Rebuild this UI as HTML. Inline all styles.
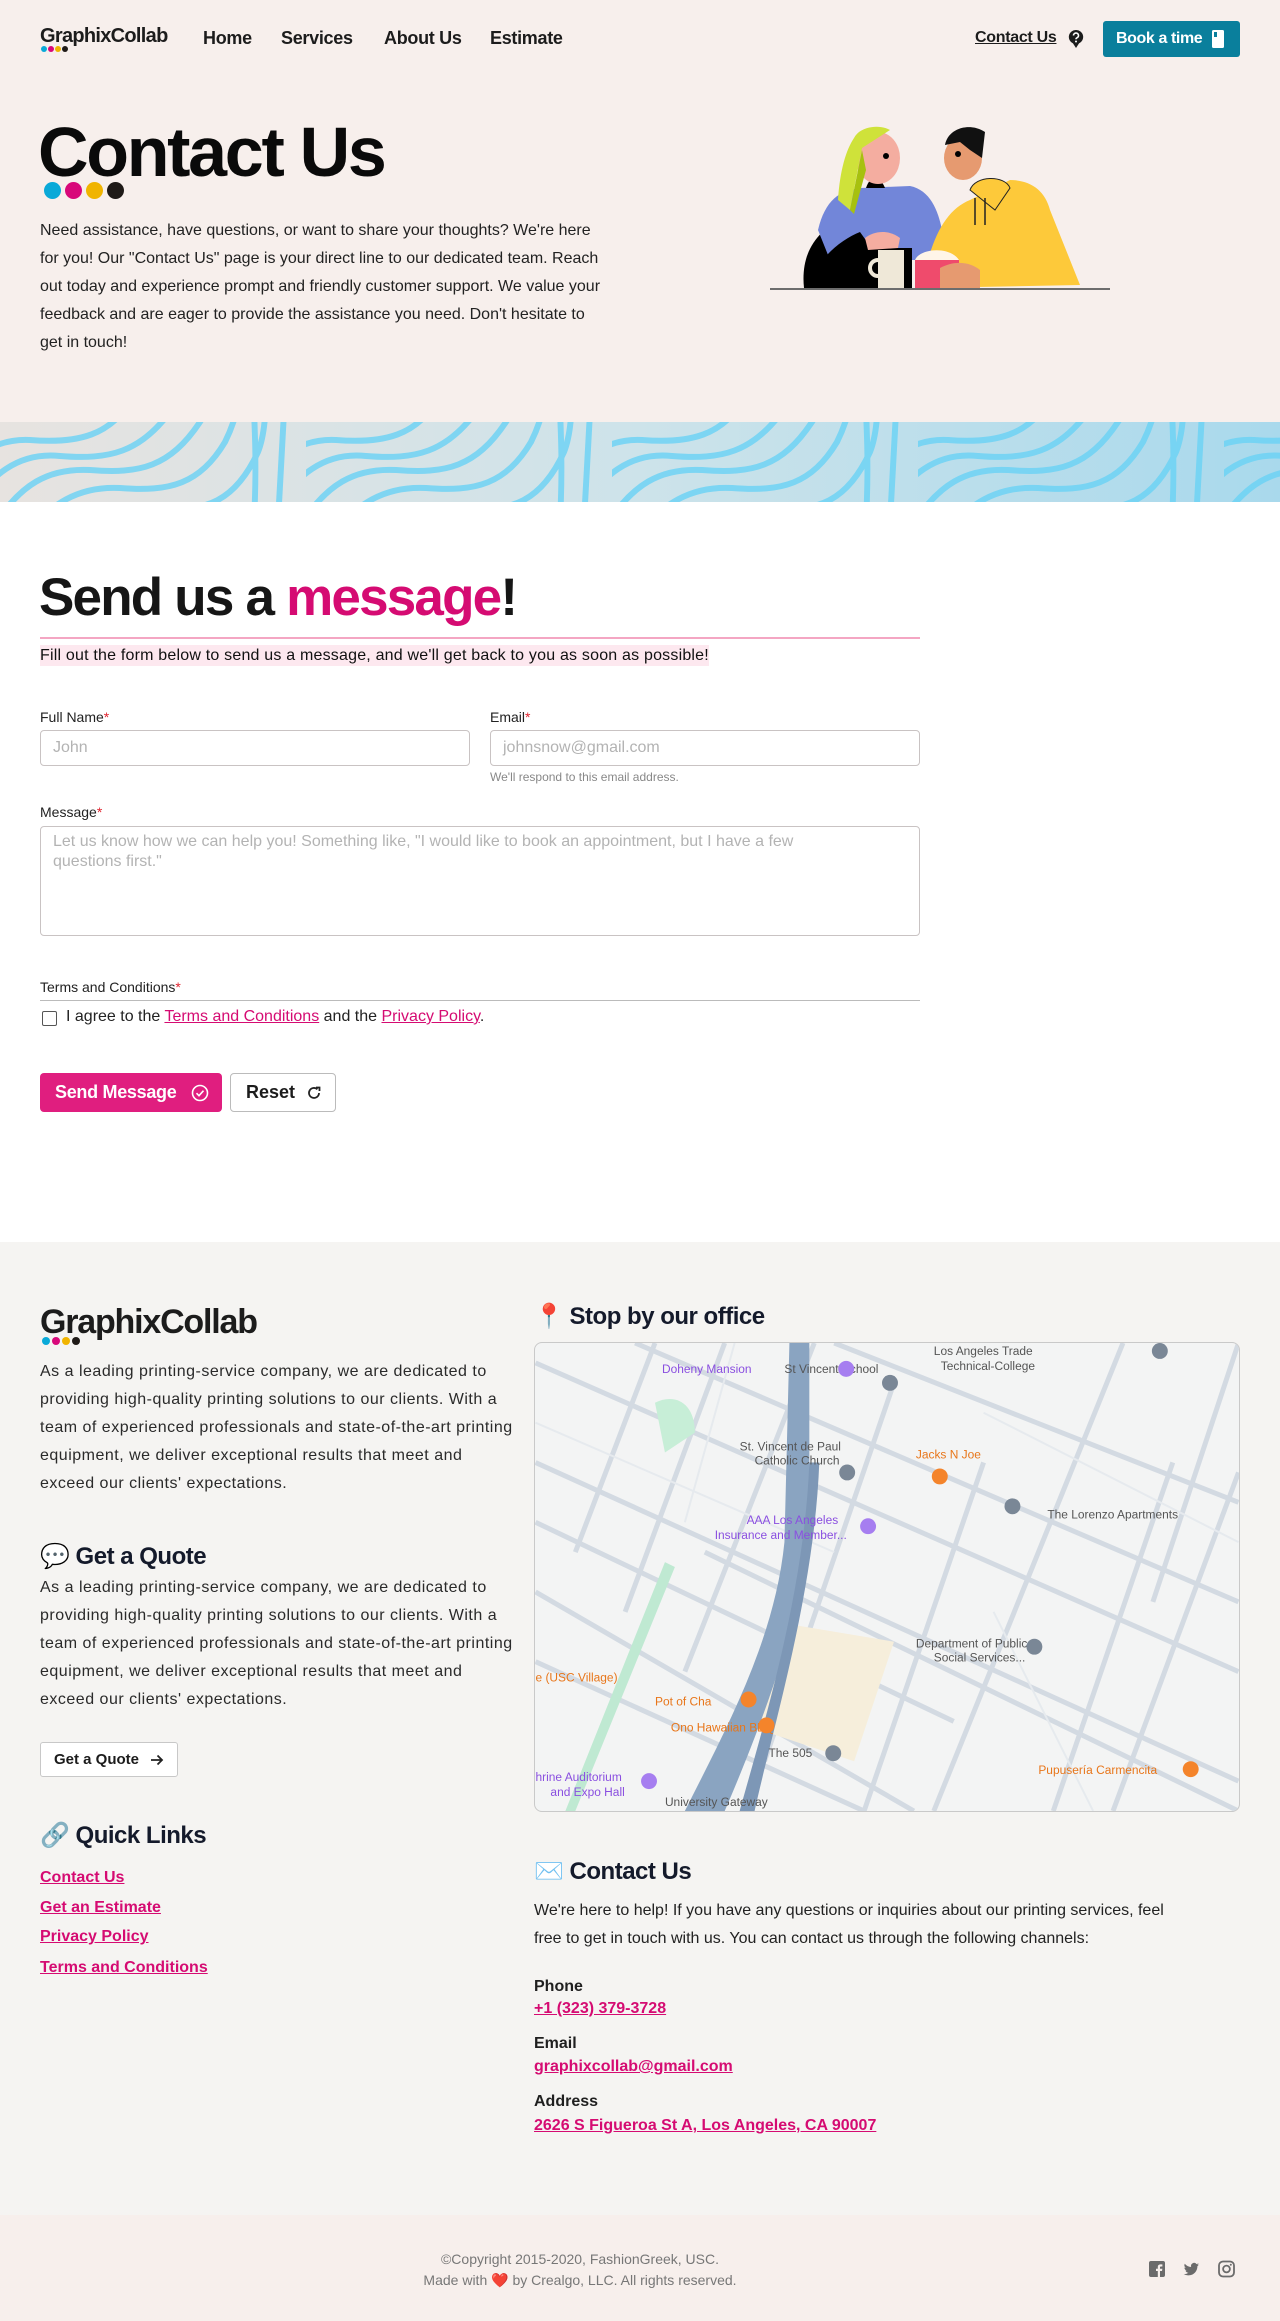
<!DOCTYPE html>
<html><head><meta charset="utf-8">
<style>
*{margin:0;padding:0;box-sizing:border-box}
body{width:1280px;height:2321px;font-family:"Liberation Sans",Arial,sans-serif;color:#1f1f1f;background:#fff;position:relative;overflow:hidden}
.abs{position:absolute}
.hero{position:absolute;left:0;top:0;width:1280px;height:422px;background:#f7efec}
.nav a{position:absolute;top:28px;font-size:18px;font-weight:bold;color:#1c1c1c;text-decoration:none;letter-spacing:-0.3px}
.dots span{display:inline-block;border-radius:50%;margin-right:3px}
.pink{color:#d50b72}
.lbl{position:absolute;font-size:14px;color:#222}
.lbl b{color:#e0242f;font-weight:normal}
.inp{position:absolute;border:1px solid #c9c3c3;border-radius:4px;background:#fff;font-size:16px;color:#b3b3b3;padding:8px 12px;line-height:22px}
.fp{position:absolute;font-size:16px;line-height:28px;color:#2a2a2a;letter-spacing:0.5px}
.h3{position:absolute;font-size:24px;font-weight:bold;color:#141a2b;letter-spacing:-0.5px}
.ql{position:absolute;left:40px;font-size:16px;font-weight:bold;color:#d50b72;text-decoration:underline}
.ci{position:absolute;left:534px;font-size:16px;font-weight:bold}
</style></head><body>
<div class="hero"></div>

<!-- NAV -->
<div class="abs" style="left:40px;top:25px;font-size:20px;font-weight:bold;letter-spacing:-0.7px;color:#1c1c1c">GraphixCollab</div>
<div class="abs dots" style="left:41px;top:46px;line-height:0"><span style="width:6px;height:6px;background:#0aa9d8;margin-right:1px"></span><span style="width:6px;height:6px;background:#d8087a;margin-right:1px"></span><span style="width:6px;height:6px;background:#f0b400;margin-right:1px"></span><span style="width:6px;height:6px;background:#1f1a17"></span></div>
<div class="nav">
<a style="left:203px">Home</a>
<a style="left:281px">Services</a>
<a style="left:384px">About Us</a>
<a style="left:490px">Estimate</a>
</div>
<div class="abs" style="left:975px;top:29px;font-size:16px;font-weight:bold;text-decoration:underline;color:#1c1c1c;letter-spacing:-0.3px">Contact Us</div>
<svg class="abs" style="left:1068px;top:29px" width="16" height="20" viewBox="0 0 16 20"><path d="M8 1a7 7 0 0 0-3 13.4L8 19l3-4.6A7 7 0 0 0 8 1z" fill="#1c1c1c"/><path d="M5.5 6.5a2.5 2.5 0 1 1 3.5 2.3c-.7.3-1 .8-1 1.5" stroke="#fff" stroke-width="1.6" fill="none"/><circle cx="8" cy="12.5" r="1" fill="#fff"/></svg>
<div class="abs" style="left:1103px;top:21px;width:137px;height:36px;background:#0a7f9c;border-radius:3px;color:#fff;font-size:16px;font-weight:bold;line-height:36px;padding-left:13px;letter-spacing:-0.4px">Book a time</div>
<svg class="abs" style="left:1212px;top:30px" width="12" height="18"><rect width="12" height="18" rx="1.5" fill="#fff"/><rect x="2" y="2" width="3" height="5" fill="#0a7f9c"/></svg>

<!-- HERO TEXT -->
<div class="abs" style="left:38px;top:112px;font-size:70px;font-weight:bold;letter-spacing:-2.3px;color:#0a0a0a;line-height:80px">Contact Us</div>
<div class="abs dots" style="left:44px;top:182px;line-height:0"><span style="width:17px;height:17px;background:#0aa9d8;margin-right:4px"></span><span style="width:17px;height:17px;background:#d8087a;margin-right:4px"></span><span style="width:17px;height:17px;background:#f0b400;margin-right:4px"></span><span style="width:17px;height:17px;background:#1f1a17"></span></div>
<div class="abs" style="left:40px;top:217px;width:562px;font-size:16px;line-height:28px;color:#222">Need assistance, have questions, or want to share your thoughts? We're here for you! Our "Contact Us" page is your direct line to our dedicated team. Reach out today and experience prompt and friendly customer support. We value your feedback and are eager to provide the assistance you need. Don't hesitate to get in touch!</div>

<!-- ILLUSTRATION -->
<svg class="abs" style="left:770px;top:120px" width="340" height="175" viewBox="0 0 340 175">
<path d="M34 168 C30 130 50 110 70 100 L120 120 L100 168 Z" fill="#000"/>
<path d="M48 110 C55 80 70 70 90 68 L140 66 C160 70 168 90 172 110 L160 140 L60 140 Z" fill="#7286d9"/>
<rect x="72" y="128" width="70" height="40" fill="#000"/>
<path d="M40 168 C45 140 70 120 90 112 L110 140 L60 168 Z" fill="#000"/>
<path d="M96 68 C100 55 110 55 115 68 Z" fill="#000"/>
<ellipse cx="108" cy="38" rx="22" ry="26" fill="#f4ada0"/>
<path d="M84 18 C90 6 110 4 120 10 L92 28 L80 90 L68 80 C70 50 76 30 84 18 Z" fill="#cfe23a"/>
<path d="M80 90 L92 30 L96 50 L84 94 Z" fill="#a7c10f"/>
<circle cx="116" cy="36" r="3" fill="#000"/>
<path d="M95 118 C105 110 120 110 130 118 L128 128 L98 130 Z" fill="#f4ada0"/>
<path d="M108 130 h26 v38 h-26 z" fill="#efe8d8"/>
<path d="M108 140 a8 8 0 0 0 0 16" stroke="#efe8d8" stroke-width="4" fill="none"/>
<path d="M152 168 C160 120 175 90 200 80 L240 60 C260 60 275 70 280 90 L310 165 Z" fill="#fdc93a"/>
<path d="M200 70 C205 55 235 55 240 68 L225 90 Z" fill="#fdc93a" stroke="#222" stroke-width="1"/>
<line x1="205" y1="78" x2="205" y2="105" stroke="#222" stroke-width="1.5"/>
<line x1="215" y1="78" x2="215" y2="105" stroke="#222" stroke-width="1.5"/>
<ellipse cx="193" cy="38" rx="19" ry="22" fill="#e69a70"/>
<path d="M175 25 C178 8 200 2 215 12 L212 38 L200 30 L190 22 Z" fill="#111"/>
<circle cx="188" cy="34" r="3" fill="#000"/>
<path d="M145 140 h44 v28 h-44 z" fill="#ef4b6c"/>
<path d="M145 140 C150 128 180 126 189 140 Z" fill="#fff5e8"/>
<path d="M170 148 C185 140 200 142 210 150 L210 168 L170 168 Z" fill="#e69a70"/>
<line x1="0" y1="169" x2="340" y2="169" stroke="#6d6d6d" stroke-width="2"/>
</svg>

<!-- WAVE BAND -->
<svg class="abs" style="left:0;top:422px" width="1280" height="80">
<defs>
<linearGradient id="bg" x1="0" x2="1"><stop offset="0" stop-color="#e7e3e0"/><stop offset="0.5" stop-color="#cde3ea"/><stop offset="1" stop-color="#a9d9ec"/></linearGradient>
<pattern id="wv" width="306" height="80" patternUnits="userSpaceOnUse">
<g fill="none" stroke="#69d2f5" stroke-width="6" opacity="0.8">
<path d="M-40 100 C-10 50 20 30 60 34 C110 38 140 30 170 -10"/>
<path d="M-10 110 C20 60 50 46 90 48 C140 52 170 45 200 0 C212 -20 220 -40 222 -60"/>
<path d="M20 120 C50 80 80 64 120 66 C170 70 200 62 225 20 C235 0 240 -20 240 -40"/>
<path d="M60 130 C90 90 120 84 160 86 C205 90 235 80 258 30 C266 10 266 -20 266 -40"/>
<path d="M-70 90 C-40 40 -10 16 30 18 C80 22 110 12 130 -20"/>
<path d="M254 -10 C256 30 256 60 254 100"/>
<path d="M284 -10 C282 30 280 60 278 100"/>
</g></pattern></defs>
<rect width="1280" height="80" fill="url(#bg)"/>
<rect width="1280" height="80" fill="url(#wv)"/>
</svg>

<!-- FORM SECTION -->
<div class="abs" style="left:39px;top:566px;font-size:53px;font-weight:bold;letter-spacing:-1.8px;color:#161616;line-height:64px">Send us a <span class="pink">message</span>!</div>
<div class="abs" style="left:40px;top:637px;width:880px;height:2px;background:#f4a6c3"></div>
<div class="abs" style="left:40px;top:645px;font-size:16px;line-height:21px;background:#fde8ef;color:#111;letter-spacing:0.2px">Fill out the form below to send us a message, and we'll get back to you as soon as possible!</div>

<div class="lbl" style="left:40px;top:709px">Full Name<b>*</b></div>
<div class="inp" style="left:40px;top:730px;width:430px;height:36px;padding-top:6px">John</div>
<div class="lbl" style="left:490px;top:709px">Email<b>*</b></div>
<div class="inp" style="left:490px;top:730px;width:430px;height:36px;padding-top:6px">johnsnow@gmail.com</div>
<div class="abs" style="left:490px;top:770px;font-size:12px;color:#888">We'll respond to this email address.</div>
<div class="lbl" style="left:40px;top:804px">Message<b>*</b></div>
<div class="inp" style="left:40px;top:826px;width:880px;height:110px;padding:5px 60px 0 12px;line-height:20px;font-size:16px">Let us know how we can help you! Something like, "I would like to book an appointment, but I have a few questions first."</div>
<div class="lbl" style="left:40px;top:979px">Terms and Conditions<b>*</b></div>
<div class="abs" style="left:40px;top:1000px;width:880px;height:1px;background:#bbb"></div>
<div class="abs" style="left:42px;top:1011px;width:15px;height:15px;border:1.5px solid #555;border-radius:2px"></div>
<div class="abs" style="left:66px;top:1008px;font-size:16px;color:#222">I agree to the <span class="pink" style="text-decoration:underline">Terms and Conditions</span> and the <span class="pink" style="text-decoration:underline">Privacy Policy</span>.</div>
<div class="abs" style="left:40px;top:1073px;width:182px;height:39px;background:#e01e7f;border-radius:4px;color:#fff;font-size:18px;font-weight:bold;line-height:39px;padding-left:15px;letter-spacing:-0.3px">Send Message</div>
<svg class="abs" style="left:191px;top:1084px" width="18" height="18"><circle cx="9" cy="9" r="7.5" stroke="#fff" stroke-width="1.6" fill="none"/><path d="M5.5 9.2l2.5 2.5 4.5-5" stroke="#fff" stroke-width="1.6" fill="none"/></svg>
<div class="abs" style="left:230px;top:1073px;width:106px;height:39px;border:1px solid #bbb;border-radius:4px;font-size:18px;font-weight:bold;line-height:37px;padding-left:15px;color:#1c1c1c">Reset</div>
<svg class="abs" style="left:306px;top:1085px" width="16" height="16"><path d="M13 8a5 5 0 1 1-1.6-3.7" stroke="#222" stroke-width="1.8" fill="none"/><path d="M10 2.5h3.5V6" stroke="#222" stroke-width="1.8" fill="none"/></svg>

<!-- FOOTER -->
<div class="abs" style="left:0;top:1242px;width:1280px;height:973px;background:#f5f4f2"></div>
<div class="abs" style="left:40px;top:1303px;font-size:34px;font-weight:bold;letter-spacing:-1.2px;color:#1c1c1c">GraphixCollab</div>
<div class="abs dots" style="left:42px;top:1337px;line-height:0"><span style="width:8px;height:8px;background:#0aa9d8;margin-right:2px"></span><span style="width:8px;height:8px;background:#d8087a;margin-right:2px"></span><span style="width:8px;height:8px;background:#f0b400;margin-right:2px"></span><span style="width:8px;height:8px;background:#1f1a17"></span></div>
<div class="fp" style="left:40px;top:1358px;width:475px">As a leading printing-service company, we are dedicated to providing high-quality printing solutions to our clients. With a team of experienced professionals and state-of-the-art printing equipment, we deliver exceptional results that meet and exceed our clients' expectations.</div>

<div class="h3" style="left:40px;top:1542px">💬 Get a Quote</div>
<div class="fp" style="left:40px;top:1574px;width:475px">As a leading printing-service company, we are dedicated to providing high-quality printing solutions to our clients. With a team of experienced professionals and state-of-the-art printing equipment, we deliver exceptional results that meet and exceed our clients' expectations.</div>
<div class="abs" style="left:40px;top:1742px;width:138px;height:35px;border:1px solid #c8c8c8;border-radius:3px;background:#fff;font-size:15px;font-weight:bold;line-height:33px;padding-left:13px;color:#1c1c1c">Get a Quote</div>
<svg class="abs" style="left:149px;top:1752px" width="16" height="16"><path d="M2 8h11M8.5 3.5L13 8l-4.5 4.5" stroke="#222" stroke-width="1.8" fill="none"/></svg>

<div class="h3" style="left:40px;top:1821px">🔗 Quick Links</div>
<div class="ql" style="left:40px;top:1869px">Contact Us</div>
<div class="ql" style="top:1899px">Get an Estimate</div>
<div class="ql" style="top:1928px">Privacy Policy</div>
<div class="ql" style="top:1959px">Terms and Conditions</div>

<div class="h3" style="left:534px;top:1302px">📍 Stop by our office</div>
<svg class="abs" style="left:534px;top:1342px;border:1px solid #c9c9c9;border-radius:8px;background:#f3f4f4" width="706" height="470" viewBox="0 0 706 470">
<g stroke="#d3dae2" stroke-width="5" fill="none">
<path d="M0 20 L706 330"/><path d="M0 120 L706 440"/><path d="M0 180 L420 380"/><path d="M0 250 L380 470"/><path d="M100 0 L706 260"/><path d="M300 0 L706 160"/>
<path d="M0 320 L330 470"/><path d="M170 210 L706 470"/>
<path d="M40 210 L120 0"/><path d="M90 270 L190 0"/><path d="M150 330 L280 0"/><path d="M230 420 L360 40"/><path d="M330 470 L450 120"/><path d="M520 470 L640 120"/><path d="M580 470 L706 130"/><path d="M620 260 L706 0"/><path d="M400 470 L590 0"/>
</g>
<g stroke="#e6eaee" stroke-width="2" fill="none"><path d="M0 80 L300 210"/><path d="M200 0 L150 180"/><path d="M450 70 L706 200"/><path d="M460 270 L560 470"/></g>
<path d="M240 280 L360 300 L320 420 L200 380 Z" fill="#f6eedb"/>
<path d="M30 470 L130 220 L140 225 L40 470 Z" fill="#bfe9d2"/>
<path d="M120 60 C140 50 160 60 160 90 L130 110 Z" fill="#c7eed7"/>
<path d="M255 0 L275 0 L275 200 C260 300 220 400 190 470 L150 470 C190 390 240 300 250 200 Z" fill="#8aa4c1"/>
<path d="M275 120 L285 120 C280 250 240 380 220 470 L205 470 C230 380 270 250 275 120Z" fill="#7d97b6"/>
<g font-family="Liberation Sans,sans-serif" font-size="12">
<text x="127" y="30" fill="#8a4fe0">Doheny Mansion</text>
<text x="250" y="30" fill="#555">St Vincent School</text>
<text x="400" y="12" fill="#555">Los Angeles Trade</text><text x="407" y="27" fill="#555">Technical-College</text>
<text x="205" y="108" fill="#555">St. Vincent de Paul</text><text x="220" y="122" fill="#555">Catholic Church</text>
<text x="382" y="116" fill="#e8761a">Jacks N Joe</text>
<text x="514" y="176" fill="#555">The Lorenzo Apartments</text>
<text x="212" y="182" fill="#8a4fe0">AAA Los Angeles</text><text x="180" y="197" fill="#8a4fe0">Insurance and Member...</text>
<text x="382" y="306" fill="#555">Department of Public</text><text x="400" y="320" fill="#555">Social Services...</text>
<text x="0" y="340" fill="#e8761a">e (USC Village)</text>
<text x="120" y="364" fill="#e8761a">Pot of Cha</text>
<text x="136" y="390" fill="#e8761a">Ono Hawaiian BBQ</text>
<text x="234" y="416" fill="#555">The 505</text>
<text x="505" y="433" fill="#e8761a">Pupusería Carmencita</text>
<text x="0" y="440" fill="#8a4fe0">hrine Auditorium</text><text x="15" y="455" fill="#8a4fe0">and Expo Hall</text>
<text x="130" y="465" fill="#555">University Gateway</text>
</g>
<g fill="#7a8796"><circle cx="356" cy="40" r="8"/><circle cx="313" cy="130" r="8"/><circle cx="479" cy="164" r="8"/><circle cx="501" cy="305" r="8"/><circle cx="299" cy="412" r="8"/><circle cx="627" cy="8" r="8"/></g>
<g fill="#f4842b"><circle cx="406" cy="134" r="8"/><circle cx="214" cy="358" r="8"/><circle cx="232" cy="384" r="8"/><circle cx="658" cy="428" r="8"/></g>
<g fill="#a67ef0"><circle cx="312" cy="26" r="8"/><circle cx="334" cy="184" r="8"/><circle cx="114" cy="440" r="8"/></g>
</svg>

<div class="h3" style="left:534px;top:1857px">✉️ Contact Us</div>
<div class="abs" style="left:534px;top:1897px;width:650px;font-size:16px;line-height:28px;color:#222">We're here to help! If you have any questions or inquiries about our printing services, feel free to get in touch with us. You can contact us through the following channels:</div>
<div class="ci" style="top:1978px">Phone</div>
<div class="ci pink" style="top:2000px;text-decoration:underline">+1 (323) 379-3728</div>
<div class="ci" style="top:2035px">Email</div>
<div class="ci pink" style="top:2058px;text-decoration:underline">graphixcollab@gmail.com</div>
<div class="ci" style="top:2093px">Address</div>
<div class="ci pink" style="top:2117px;text-decoration:underline">2626 S Figueroa St A, Los Angeles, CA 90007</div>

<!-- BOTTOM -->
<div class="abs" style="left:0;top:2215px;width:1280px;height:106px;background:#f7efec"></div>
<div class="abs" style="left:340px;top:2249px;width:480px;text-align:center;font-size:14px;line-height:21px;color:#777">©Copyright 2015-2020, FashionGreek, USC.<br>Made with <span style="color:#e0242f">❤️</span> by Crealgo, LLC. All rights reserved.</div>
<svg class="abs" style="left:1149px;top:2260px" width="90" height="18" viewBox="0 0 90 18">
<rect x="0" y="1" width="16" height="16" rx="2" fill="#6b6b6b"/><path d="M11 17v-6h2l.4-2.3H11V7.5c0-.7.3-1 1-1h1.4V4.4H11.6c-2 0-2.8 1.1-2.8 2.8v1.5H7V11h1.8v6z" fill="#f7efec"/>
<path d="M50 4.5c-.6.3-1.2.4-1.8.5.7-.4 1.1-1 1.4-1.7-.6.4-1.300.6-2 .8A3.1 3.1 0 0 0 42.2 7 8.9 8.9 0 0 1 35.8 3.7a3.1 3.1 0 0 0 1 4.2c-.5 0-1-.2-1.4-.4 0 1.5 1.1 2.8 2.5 3.1-.5.1-.9.1-1.4 0 .4 1.2 1.6 2.1 2.9 2.2A6.3 6.3 0 0 1 34.7 14c1.4.9 3 1.4 4.8 1.4 5.700 0 8.9-4.8 8.9-8.9v-.4c.6-.5 1.1-1 1.6-1.6z" fill="#6b6b6b"/>
<rect x="70" y="1.5" width="15" height="15" rx="4" stroke="#6b6b6b" stroke-width="1.8" fill="none"/><circle cx="77.5" cy="9" r="3.4" stroke="#6b6b6b" stroke-width="1.8" fill="none"/><circle cx="81.8" cy="4.8" r="1" fill="#6b6b6b"/>
</svg>
</body></html>
